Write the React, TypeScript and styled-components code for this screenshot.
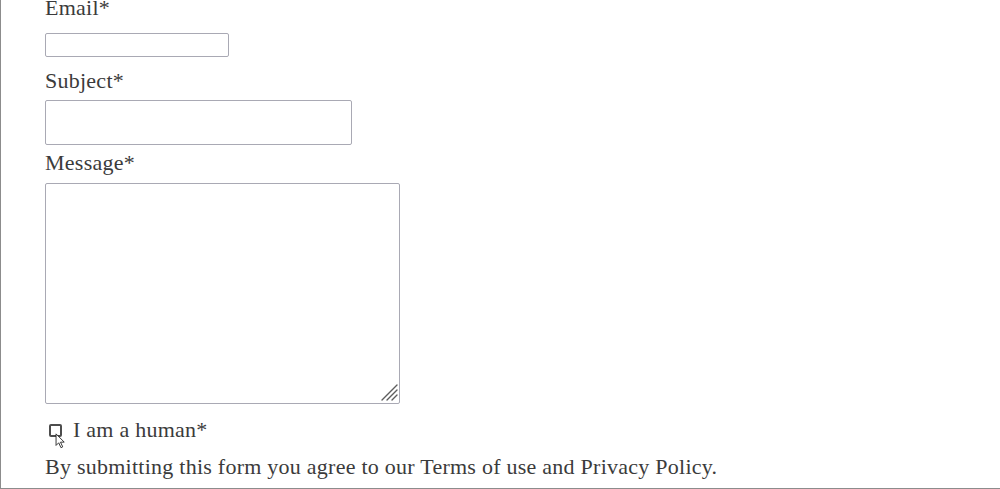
import React from 'react';
import styled, { createGlobalStyle } from 'styled-components';

const GlobalStyle = createGlobalStyle`
  html, body {
    margin: 0;
    padding: 0;
    background: #fff;
  }
  body {
    font-family: 'Liberation Serif', 'Times New Roman', serif;
    color: #3b3b3b;
  }
`;

const App: React.FC = () => {
  return (
    <Frame>
      <GlobalStyle />
      <Form onSubmit={(e) => e.preventDefault()}>
        <Label htmlFor="email" $top={-7}>
          Email*
        </Label>
        <Input id="email" type="email" $top={10} $width={184} $height={24} />

        <Label htmlFor="subject" $top={9}>
          Subject*
        </Label>
        <Input id="subject" type="text" $top={4} $width={307} $height={45} />

        <Label htmlFor="message" $top={3}>
          Message*
        </Label>
        <AreaWrap>
          <TextArea id="message" />
          <Grip viewBox="0 0 18 18" aria-hidden="true">
            <path
              d="M17 2 L2 17 M17 7 L7 17 M17 12 L12 17"
              stroke="#5e5e5e"
              strokeWidth="1.4"
              strokeLinecap="round"
            />
          </Grip>
        </AreaWrap>

        <CheckRow>
          <CheckWrap>
            <Check id="human" type="checkbox" />
            <Cursor viewBox="0 0 12 18" aria-hidden="true">
              <path
                d="M1 1 L1 14 L4 11 L6.5 16.5 L8.5 15.6 L6 10.3 L10.2 10.3 Z"
                fill="#fff"
                stroke="#222"
                strokeWidth="1"
                strokeLinejoin="round"
              />
            </Cursor>
          </CheckWrap>
          <CheckLabel htmlFor="human">I am a human*</CheckLabel>
        </CheckRow>

        <Notice>
          By submitting this form you agree to our Terms of use and Privacy
          Policy.
        </Notice>
      </Form>
    </Frame>
  );
};

export default App;

// Styles
const Frame = styled.div`
  box-sizing: border-box;
  width: 1000px;
  height: 489px;
  border-left: 1px solid #8c8c8c;
  border-bottom: 1px solid #8c8c8c;
  overflow: hidden;
`;

const Form = styled.form`
  display: flex;
  flex-direction: column;
  align-items: flex-start;
  padding-left: 44px;
  font-size: 22px;
  letter-spacing: 0.25px;
  line-height: 30px;
`;

const Label = styled.label<{ $top: number }>`
  display: block;
  margin-top: ${(p) => p.$top}px;
  height: 30px;
`;

const fieldBorder = '#a9a9b4';

const Input = styled.input<{ $top: number; $width: number; $height: number }>`
  box-sizing: border-box;
  display: block;
  margin: ${(p) => p.$top}px 0 0;
  width: ${(p) => p.$width}px;
  height: ${(p) => p.$height}px;
  border: 1px solid ${fieldBorder};
  border-radius: 2px;
  background: #fff;
  padding: 2px 6px;
  font: inherit;
  font-size: 16px;
  outline: none;
`;

const AreaWrap = styled.div`
  position: relative;
  margin-top: 5px;
  width: 355px;
  height: 221px;
`;

const TextArea = styled.textarea`
  box-sizing: border-box;
  display: block;
  margin: 0;
  width: 100%;
  height: 100%;
  border: 1px solid ${fieldBorder};
  border-radius: 2px;
  background: #fff;
  padding: 4px 6px;
  font: inherit;
  font-size: 16px;
  resize: none;
  outline: none;
`;

const Grip = styled.svg`
  position: absolute;
  right: 2px;
  bottom: 3px;
  width: 18px;
  height: 18px;
  pointer-events: none;
`;

const CheckRow = styled.div`
  display: flex;
  align-items: center;
  margin-top: 11px;
  height: 30px;
`;

const CheckWrap = styled.span`
  position: relative;
  display: inline-flex;
  margin-left: 4px;
  margin-top: 1px;
`;

const Check = styled.input`
  appearance: none;
  box-sizing: border-box;
  width: 13px;
  height: 13px;
  margin: 0;
  border: 2px solid #4d4d4d;
  border-radius: 2px;
  background: #fff;
`;

const Cursor = styled.svg`
  position: absolute;
  left: 6px;
  top: 9px;
  width: 11px;
  height: 16px;
  pointer-events: none;
`;

const CheckLabel = styled.label`
  margin-left: 11px;
`;

const Notice = styled.p`
  margin: 7px 0 0;
  height: 30px;
`;
